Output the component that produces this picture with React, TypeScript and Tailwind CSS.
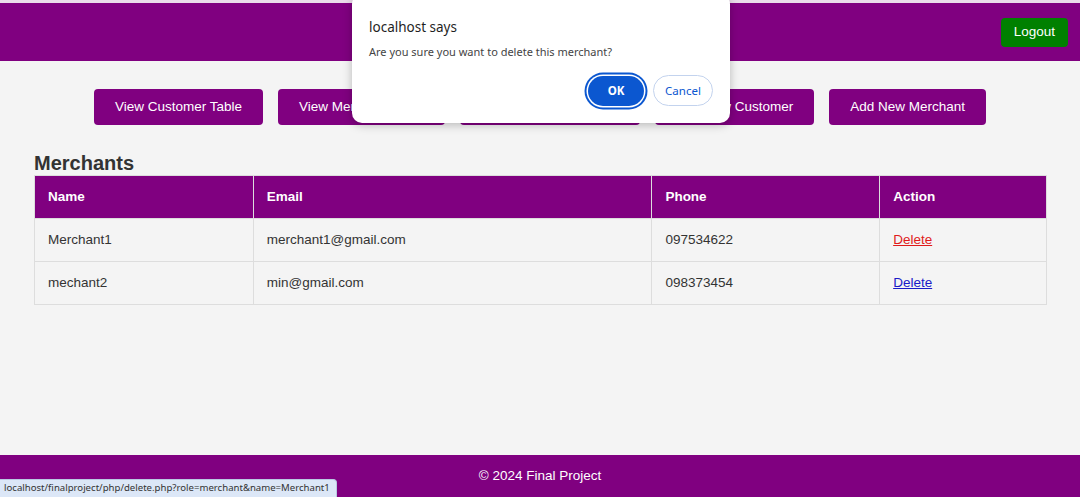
import React from "react";

const navButtons = [
  "View Customer Table",
  "View Merchant Table",
  "View Transaction Table",
  "Add New Customer",
  "Add New Merchant",
];

const rows = [
  { name: "Merchant1", email: "merchant1@gmail.com", phone: "097534622", red: true },
  { name: "mechant2", email: "min@gmail.com", phone: "098373454", red: false },
];

export default function App() {
  return (
    <div
      className="relative flex h-[497px] w-[1080px] flex-col overflow-hidden bg-[#f4f4f4] text-[#333]"
      style={{ fontFamily: '"Liberation Sans", Arial, sans-serif' }}
    >
      <div className="h-[3px] bg-[#eadcea]" />
      <header className="flex h-[58px] items-center justify-end bg-[#800080] pr-[12px]">
        <button className="flex h-[29px] items-center rounded-[4px] bg-[#008000] px-[13px] text-[13.5px] text-white">
          Logout
        </button>
      </header>

      <main className="flex-1">
        <div className="mt-[28px] flex justify-center gap-[15px]">
          {navButtons.map((b) => (
            <button
              key={b}
              className="flex h-[36px] items-center rounded-[4px] bg-[#800080] px-[21px] text-[13.5px] text-white"
            >
              {b}
            </button>
          ))}
        </div>

        <div className="mt-[26px] px-[34px] pr-[33px]">
          <h2 className="text-[20px] font-bold leading-[24px] text-[#333]">Merchants</h2>
          <table className="w-full border-collapse text-left text-[13.5px]">
            <colgroup>
              <col className="w-[219px]" />
              <col className="w-[399px]" />
              <col className="w-[228px]" />
              <col className="w-[167px]" />
            </colgroup>
            <thead>
              <tr className="bg-[#800080] text-white">
                <th className="h-[43px] border border-[#ddd] px-[13px] font-bold">Name</th>
                <th className="h-[43px] border border-[#ddd] px-[13px] font-bold">Email</th>
                <th className="h-[43px] border border-[#ddd] px-[13px] font-bold">Phone</th>
                <th className="h-[43px] border border-[#ddd] px-[13px] font-bold">Action</th>
              </tr>
            </thead>
            <tbody>
              {rows.map((r) => (
                <tr key={r.name}>
                  <td className="h-[43px] border border-[#ddd] px-[13px]">{r.name}</td>
                  <td className="h-[43px] border border-[#ddd] px-[13px]">{r.email}</td>
                  <td className="h-[43px] border border-[#ddd] px-[13px]">{r.phone}</td>
                  <td className="h-[43px] border border-[#ddd] px-[13px]">
                    <a
                      href="#"
                      className={r.red ? "text-[#e01b1b] underline" : "text-[#1a1ac8] underline"}
                    >
                      Delete
                    </a>
                  </td>
                </tr>
              ))}
            </tbody>
          </table>
        </div>
      </main>

      <footer className="flex h-[42px] items-center justify-center bg-[#800080] text-[13.5px] text-white">
        © 2024 Final Project
      </footer>

      {/* status bar */}
      <div
        className="absolute bottom-0 left-0 flex h-[18px] w-[337px] items-center overflow-hidden whitespace-nowrap rounded-tr-[4px] border-t border-r border-[#b9c9e2] bg-[#dce7f7] pl-[4px] text-[9.6px] text-[#333]"
        style={{ fontFamily: '"Noto Sans", "Open Sans", sans-serif' }}
      >
        localhost/finalproject/php/delete.php?role=merchant&amp;name=Merchant1
      </div>

      {/* alert dialog */}
      <div
        className="absolute left-[352px] top-[-6px] h-[129px] w-[378px] rounded-[10px] bg-white shadow-[0_2px_10px_rgba(0,0,0,0.25)]"
        style={{ fontFamily: '"Noto Sans", "Open Sans", sans-serif' }}
      >
        <div className="px-[17px] pt-[24px]">
          <div className="text-[13.5px] leading-[18px] text-[#1f1f1f]">localhost says</div>
          <div className="mt-[8px] text-[11px] leading-[15px] text-[#444]">
            Are you sure you want to delete this merchant?
          </div>
        </div>
        <div className="absolute right-[17px] top-[81px] flex items-center gap-[9px]">
          <button className="flex h-[30px] w-[56px] items-center justify-center rounded-full bg-[#0b57d0] text-[11.5px] font-bold text-white ring-2 ring-[#0b57d0] ring-offset-[1.5px] ring-offset-white">
            OK
          </button>
          <button className="flex h-[31px] w-[60px] items-center justify-center rounded-full border border-[#c3d3ee] bg-white text-[11.5px] text-[#0b57d0]">
            Cancel
          </button>
        </div>
      </div>
    </div>
  );
}
